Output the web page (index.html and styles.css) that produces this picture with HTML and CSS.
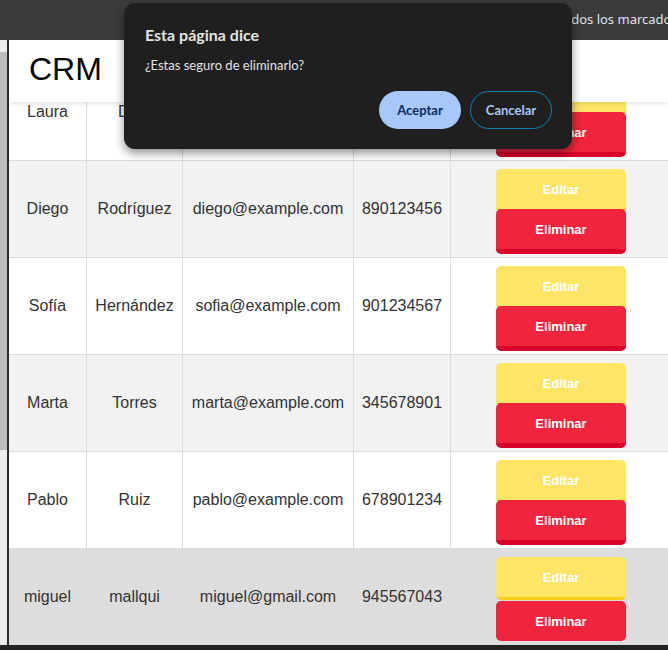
FILE: index.html
```html
<!DOCTYPE html>
<html lang="es">
<head>
<meta charset="utf-8">
<title>CRM</title>
<link rel="stylesheet" href="styles.css">
</head>
<body>
  <div class="chrome">
    <span class="bookmarks">Todos los marcadores</span>
  </div>
  <div class="main">
    <div class="sidestrip"><div class="thumb"></div></div>
    <div class="divider"></div>
    <div class="page">
      <header class="app-header"><h1>CRM</h1></header>
      <table class="clients">
        <colgroup>
          <col class="c1"><col class="c2"><col class="c3"><col class="c4"><col class="c5">
        </colgroup>
        <tbody>
          <tr>
            <td>Laura</td><td>Díaz</td><td>laura@example.com</td><td>789012345</td>
            <td class="actions"><div class="btns"><button class="btn edit">Editar</button><button class="btn del">Eliminar</button></div></td>
          </tr>
          <tr class="alt">
            <td>Diego</td><td>Rodríguez</td><td>diego@example.com</td><td>890123456</td>
            <td class="actions"><div class="btns"><button class="btn edit">Editar</button><button class="btn del">Eliminar</button></div></td>
          </tr>
          <tr>
            <td>Sofía</td><td>Hernández</td><td>sofia@example.com</td><td>901234567</td>
            <td class="actions"><div class="btns"><button class="btn edit">Editar</button><button class="btn del">Eliminar</button></div></td>
          </tr>
          <tr class="alt">
            <td>Marta</td><td>Torres</td><td>marta@example.com</td><td>345678901</td>
            <td class="actions"><div class="btns"><button class="btn edit">Editar</button><button class="btn del">Eliminar</button></div></td>
          </tr>
          <tr>
            <td>Pablo</td><td>Ruiz</td><td>pablo@example.com</td><td>678901234</td>
            <td class="actions"><div class="btns"><button class="btn edit">Editar</button><button class="btn del">Eliminar</button></div></td>
          </tr>
          <tr class="hover">
            <td>miguel</td><td>mallqui</td><td>miguel@gmail.com</td><td>945567043</td>
            <td class="actions"><div class="btns"><button class="btn edit">Editar</button><button class="btn del pressed">Eliminar</button></div></td>
          </tr>
        </tbody>
      </table>
    </div>
  </div>
  <div class="bottombar"></div>

  <div class="dialog" role="alertdialog">
    <div class="dialog-title">Esta página dice</div>
    <div class="dialog-msg">¿Estas seguro de eliminarlo?</div>
    <div class="dialog-actions">
      <button class="dbtn ok">Aceptar</button>
      <button class="dbtn cancel">Cancelar</button>
    </div>
  </div>
</body>
</html>
```
FILE: styles.css
```css
* { box-sizing: border-box; }

html, body {
  margin: 0;
  width: 668px;
  height: 650px;
  overflow: hidden;
}

body {
  background: #232323;
  display: flex;
  flex-direction: column;
  font-family: "Liberation Sans", Arial, sans-serif;
  position: relative;
}

.chrome {
  height: 40px;
  flex: 0 0 40px;
  background: #3b3b3b;
  display: flex;
  align-items: center;
  padding-left: 557px;
  white-space: nowrap;
  overflow: hidden;
}

.bookmarks {
  font-family: "Noto Sans", "Open Sans", sans-serif;
  font-size: 13px;
  color: #e2e2e2;
  margin-top: -2px;
}

.main {
  flex: 0 0 605px;
  display: flex;
  overflow: hidden;
}

.sidestrip {
  width: 7px;
  flex: 0 0 7px;
  background: #ececec;
  padding-top: 12px;
}

.thumb {
  height: 398px;
  background: #bcbcbc;
}

.divider {
  width: 2px;
  flex: 0 0 2px;
  background: #2b2b2b;
}

.page {
  flex: 1;
  background: #fff;
  position: relative;
  overflow: hidden;
  padding-top: 24px;
}

.app-header {
  position: absolute;
  top: 0;
  left: 0;
  right: 0;
  height: 62px;
  background: #fff;
  box-shadow: 0 2px 4px rgba(0, 0, 0, 0.1);
  padding: 11px 0 0 20px;
  z-index: 2;
}

.app-header h1 {
  margin: 0;
  font-size: 32px;
  font-weight: normal;
  color: #000;
  line-height: 37px;
}

.clients {
  width: 662px;
  table-layout: fixed;
  border-collapse: separate;
  border-spacing: 0;
  font-size: 16px;
  color: #333;
}

.c1 { width: 78px; }
.c2 { width: 96px; }
.c3 { width: 171px; }
.c4 { width: 97px; }
.c5 { width: 220px; }

.clients td {
  border-right: 1px solid #ddd;
  border-bottom: 1px solid #ddd;
  text-align: center;
  vertical-align: middle;
  padding: 0;
  white-space: nowrap;
  overflow: hidden;
}

.clients td:last-child { border-right: none; }

.clients tr.alt td { background: #f2f2f2; }
.clients tr.hover td { background: #dddddd; border-right-color: #dddddd; }

.clients td.actions {
  vertical-align: top;
  padding: 8px 0 3px;
}

.btns {
  width: 130px;
  margin: 0 auto;
  display: flex;
  flex-direction: column;
}

.btn {
  display: block;
  width: 130px;
  border: none;
  border-radius: 5px;
  color: #fff;
  font-family: "Liberation Sans", Arial, sans-serif;
  font-weight: bold;
  font-size: 13px;
  padding: 0;
  cursor: pointer;
}

.btn.edit {
  height: 43px;
  background: #ffe566;
  border-bottom: 3px solid #f8cf1a;
  position: relative;
  z-index: 0;
}

.btn.del {
  height: 45px;
  margin-top: -3px;
  background: #f0243c;
  border-bottom: 5px solid #d9002a;
  position: relative;
  z-index: 1;
}

.btn.del.pressed {
  height: 40px;
  margin-top: 1px;
  border-bottom: none;
}

.bottombar {
  flex: 0 0 5px;
  background: #232323;
}

.dialog {
  position: absolute;
  top: 3px;
  left: 124px;
  width: 448px;
  height: 146px;
  background: #1f1f1f;
  border-radius: 11px;
  box-shadow: 0 4px 10px rgba(0, 0, 0, 0.45), 0 0 0 1px rgba(255, 255, 255, 0.04);
  padding: 22px 20px 20px 21px;
  font-family: "Noto Sans", "Open Sans", sans-serif;
  color: #e3e3e3;
  display: flex;
  flex-direction: column;
  z-index: 10;
}

.dialog-title {
  font-family: Lato, "Noto Sans", sans-serif;
  font-weight: bold;
  font-size: 16px;
  line-height: 20px;
}

.dialog-msg {
  font-family: Lato, "Noto Sans", sans-serif;
  font-size: 13px;
  line-height: 18px;
  margin-top: 11px;
}

.dialog-actions {
  margin-top: auto;
  display: flex;
  justify-content: flex-end;
  gap: 9px;
}

.dbtn {
  width: 82px;
  height: 38px;
  border-radius: 19px;
  font-family: Lato, "Noto Sans", sans-serif;
  font-weight: bold;
  font-size: 13px;
  padding: 0;
}

.dbtn.ok {
  background: #a8c7fa;
  border: none;
  color: #0b2a5c;
}

.dbtn.cancel {
  background: transparent;
  border: 1px solid #0f7fb8;
  color: #a8c7fa;
}
```
